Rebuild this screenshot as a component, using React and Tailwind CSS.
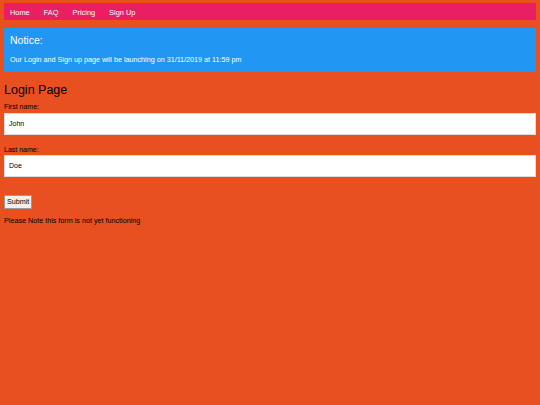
import React from "react";

export default function App() {
  return (
    <div className="min-h-[405px] bg-[#e85020] px-1 pt-[3px] font-['Liberation_Sans',Arial,sans-serif] text-black">
      <div className="flex h-[17px] items-center gap-[14px] bg-[#e91e63] px-[6px] pt-[2px] text-[7.4px] text-white">
        <span>Home</span>
        <span>FAQ</span>
        <span>Pricing</span>
        <span>Sign Up</span>
      </div>
      <div className="mt-2 h-[44px] bg-[#2196f3] px-[6px] pt-[5px] text-white">
        <div className="text-[10.5px] leading-[14px]">Notice:</div>
        <p className="mt-[8px] text-[7.2px] leading-[9px]">
          Our Login and Sign up page will be launching on 31/11/2019 at 11:59 pm
        </p>
      </div>
      <h2 className="mt-[9px] text-[12.5px] leading-[18px]">Login Page</h2>
      <div className="mt-[3px] text-[7px] leading-[9px]">First name:</div>
      <div className="mt-[2px] flex h-[22px] items-center border border-[#ddd] bg-white px-[4px] text-[7px]">
        John
      </div>
      <div className="mt-[10px] text-[7px] leading-[9px]">Last name:</div>
      <div className="mt-[1px] flex h-[22px] items-center border border-[#ddd] bg-white px-[4px] text-[7px]">
        Doe
      </div>
      <button className="mt-[18px] block h-[14px] border border-[#999] bg-[#efefef] px-[2px] text-[7.2px] font-normal leading-none text-black">
        Submit
      </button>
      <p className="mt-[7px] text-[7.2px] leading-[9px]">Please Note this form is not yet functioning</p>
    </div>
  );
}
